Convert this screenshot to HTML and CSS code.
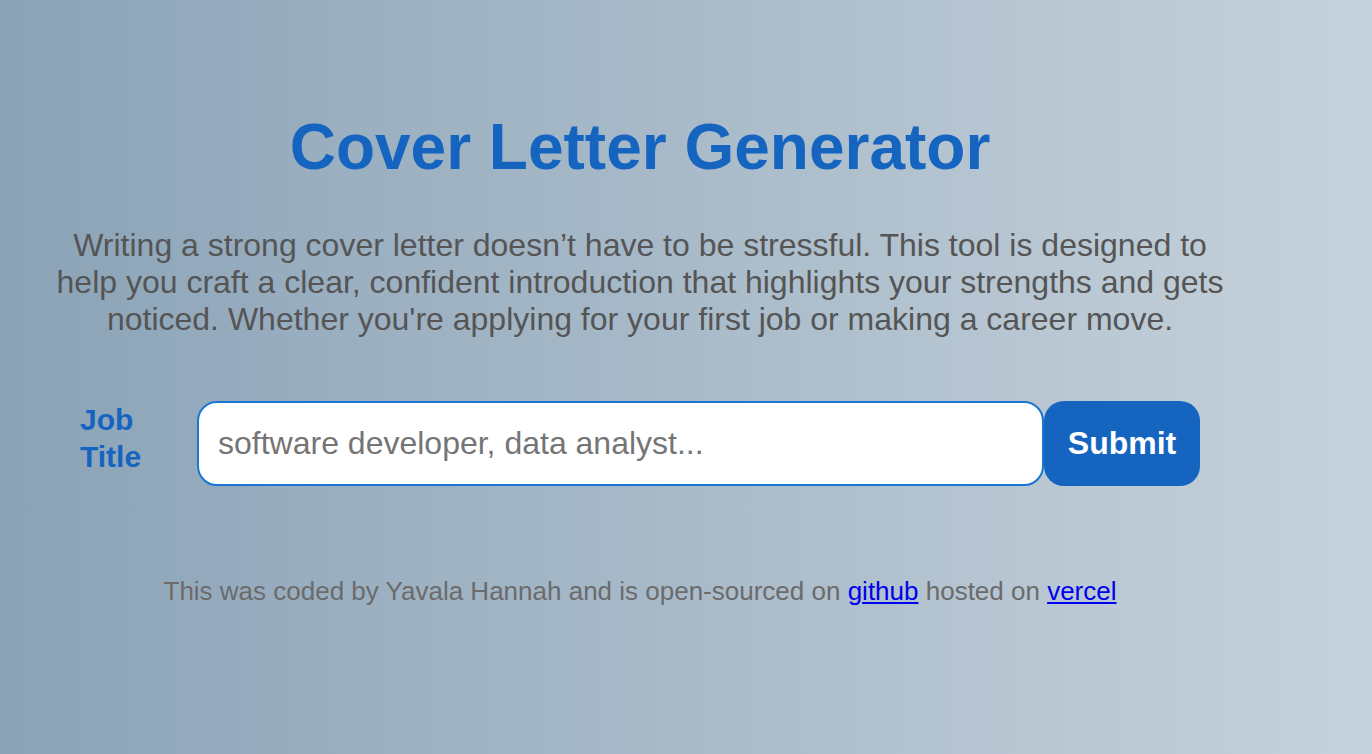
FILE: index.html
```html
<!DOCTYPE html>
<html lang="en">
<head>
<meta charset="utf-8">
<title>Cover Letter Generator</title>
<link rel="stylesheet" href="styles.css">
</head>
<body>
<main class="container">
  <h1 class="title">Cover Letter Generator</h1>
  <p class="intro">Writing a strong cover letter doesn’t have to be stressful. This tool is designed to help you craft a clear, confident introduction that highlights your strengths and gets noticed. Whether you're applying for your first job or making a career move.</p>
  <form class="search-form">
    <label class="job-label" for="job">Job Title</label>
    <input class="job-input" id="job" type="text" placeholder="software developer, data analyst...">
    <button class="submit-btn" type="submit">Submit</button>
  </form>
  <footer class="footer">This was coded by Yavala Hannah and is open-sourced on <a href="#">github</a> hosted on <a href="#">vercel</a></footer>
</main>
</body>
</html>
```

FILE: styles.css
```css
html, body {
  margin: 0;
  padding: 0;
  min-height: 100%;
}
body {
  min-height: 754px;
  background: linear-gradient(to right, #8ba3b7, #c6d2db);
  font-family: "Liberation Sans", Arial, sans-serif;
}
.container {
  width: 1280px;
  box-sizing: border-box;
  padding: 110px 50px 40px;
  text-align: center;
}
.title {
  margin: 0;
  font-size: 64px;
  font-weight: bold;
  color: #1565c0;
  line-height: normal;
}
.intro {
  margin: 43px 0 0;
  font-size: 32px;
  line-height: 37px;
  color: #555555;
}
.search-form {
  display: flex;
  justify-content: center;
  align-items: flex-start;
  margin-top: 63px;
  text-align: left;
}
.job-label {
  width: 117px;
  flex: none;
  font-size: 30px;
  font-weight: bold;
  line-height: 37px;
  color: #1565c0;
}
.job-input {
  width: 847px;
  height: 85px;
  box-sizing: border-box;
  flex: none;
  border: 2px solid #1976d2;
  border-radius: 20px;
  background: #ffffff;
  padding: 0 19px;
  font-family: "Liberation Sans", Arial, sans-serif;
  font-size: 32px;
  color: #333;
  outline: none;
}
.job-input::placeholder {
  color: #757575;
}
.submit-btn {
  width: 156px;
  height: 85px;
  flex: none;
  border: none;
  border-radius: 20px;
  background: #1565c0;
  color: #ffffff;
  font-family: "Liberation Sans", Arial, sans-serif;
  font-size: 32px;
  font-weight: bold;
  padding: 0;
  cursor: pointer;
}
.footer {
  margin-top: 90px;
  font-size: 26px;
  color: #6b6b6b;
}
.footer a {
  color: #0000ee;
}
```
